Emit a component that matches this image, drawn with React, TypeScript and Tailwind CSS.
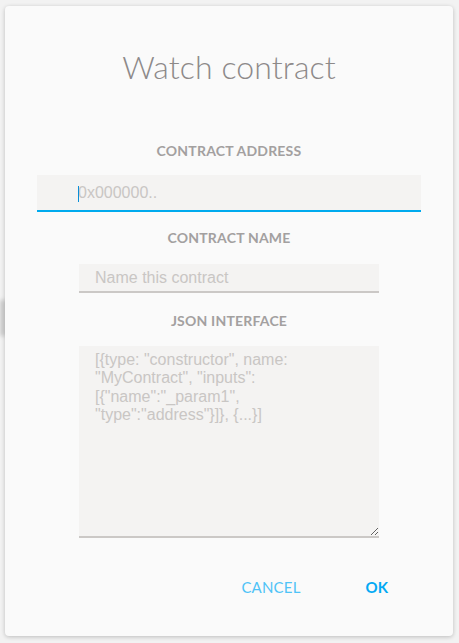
import React from "react";

export default function App() {
  return (
    <div className="relative w-[459px] h-[643px] bg-[#f2f2f2] overflow-hidden pt-[6px] pl-[5px]" style={{ fontFamily: "Lato, 'Noto Sans', sans-serif" }}>
      <div className="absolute left-0 top-[300px] w-[6px] h-[36px] bg-[#c9c9c9] blur-[2px]" />
      <div className="relative w-[448px] h-[630px] bg-[#fafafa] rounded-[4px] shadow-[0_1px_4px_rgba(0,0,0,0.22)] flex flex-col items-center">
        <h1 className="mt-[42px] h-[38px] text-[32px] leading-[38px] font-light text-[#8d8989] tracking-[0.1px]">Watch contract</h1>

        <div className="mt-[56px] h-[17px] text-[14px] leading-[17px] font-bold text-[#a3a0a0] tracking-[0.2px]">CONTRACT ADDRESS</div>
        <div className="relative mt-[16px]">
          <input
            placeholder="0x000000.."
            className="block w-[384px] h-[37px] bg-[#f4f3f2] border-b-2 border-[#00aaee] pl-[41px] text-[16px] outline-none placeholder:text-[#c9c6c4]"
            style={{ fontFamily: "'Liberation Sans', Arial, sans-serif" }}
          />
          <span className="absolute left-[41px] top-[11px] w-[1px] h-[16px] bg-[#0a8fd8]" />
        </div>

        <div className="mt-[17px] h-[17px] text-[14px] leading-[17px] font-bold text-[#a3a0a0] tracking-[0.2px]">CONTRACT NAME</div>
        <input
          placeholder="Name this contract"
          className="mt-[18px] w-[300px] h-[29px] bg-[#f4f3f2] border-b-2 border-[#cbc8c6] pl-[16px] text-[16px] outline-none placeholder:text-[#c9c6c4]"
          style={{ fontFamily: "'Liberation Sans', Arial, sans-serif" }}
        />

        <div className="mt-[19px] h-[17px] text-[14px] leading-[17px] font-bold text-[#a3a0a0] tracking-[0.2px]">JSON INTERFACE</div>
        <textarea
          placeholder={'[{type: "constructor", name: "MyContract", "inputs": [{"name":"_param1", "type":"address"}]}, {...}]'}
          className="mt-[17px] w-[300px] h-[192px] bg-[#f4f3f2] border-b-2 border-[#cbc8c6] pl-[16px] pr-[70px] pt-[5px] text-[16px] leading-[18.4px] outline-none placeholder:text-[#c9c6c4] block"
          style={{ fontFamily: "'Liberation Sans', Arial, sans-serif" }}
        />

        <div className="mt-[40px] w-full flex justify-end pr-[65px] gap-[65px] text-[15px] leading-[18px]">
          <button className="uppercase text-[#4fc3f7] font-normal tracking-[0.2px]">Cancel</button>
          <button className="uppercase text-[#03a9f4] font-bold">OK</button>
        </div>
      </div>
    </div>
  );
}
